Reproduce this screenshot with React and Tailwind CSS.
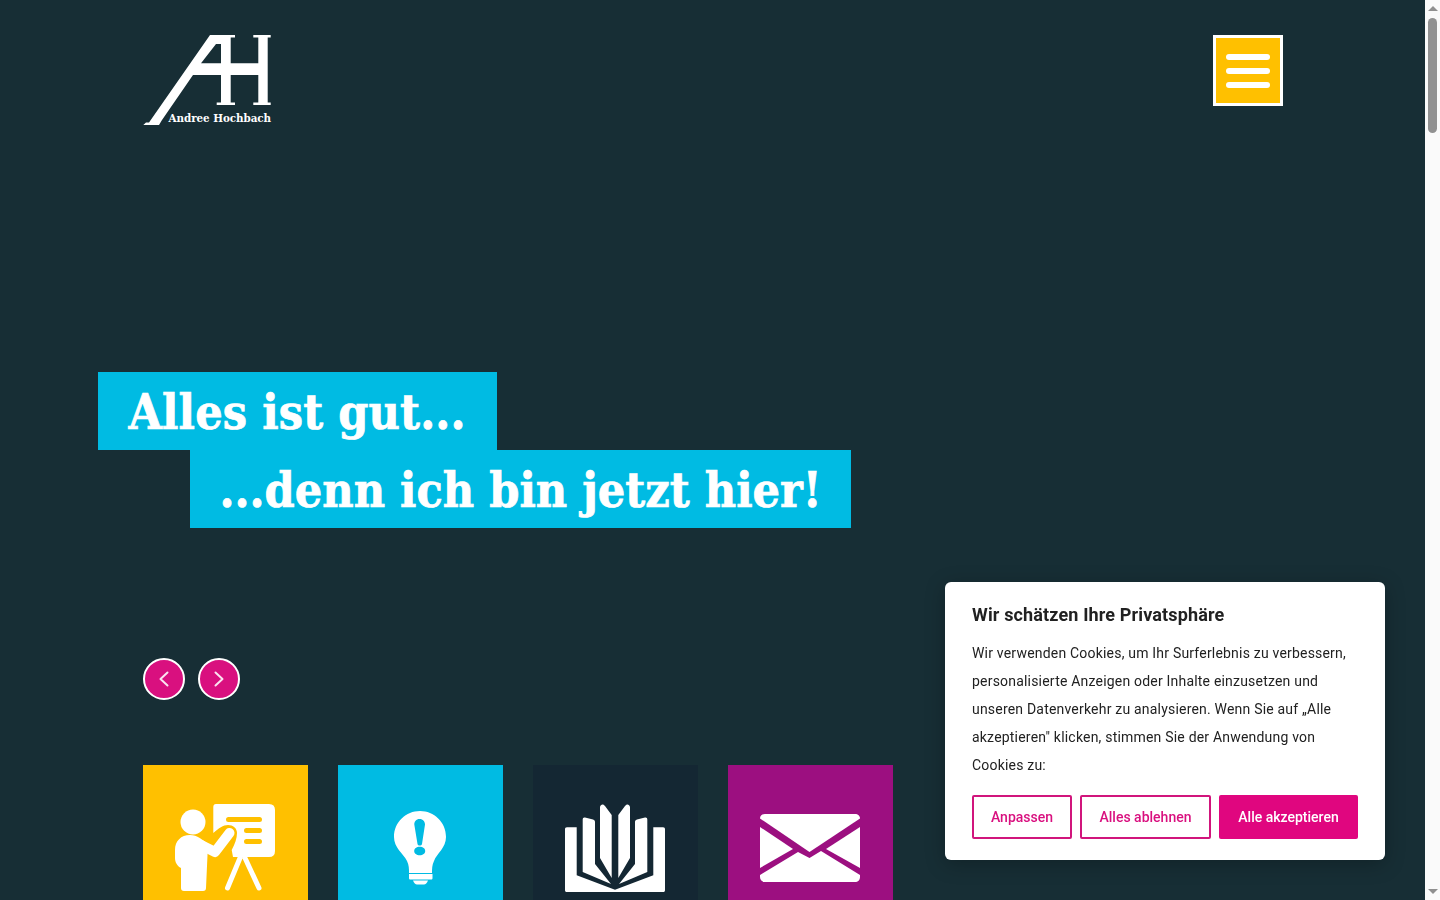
import React from "react";

const SLAB = "[font-family:'DejaVu_Serif_Condensed','DejaVu_Serif',serif]";

function Logo() {
  return (
    <div className="relative w-[130px] h-[90px]">
      <svg width="130" height="90" viewBox="0 0 130 90" className="block">
        <path fill="#fff" fillRule="evenodd" d="M0.3 90 L3 87.5 L6 87.5 L67 0 L92 0 L92 2.5 L87.7 2.5 L87.7 28.3 L115.3 28.3 L115.3 2.5 L110.3 2.5 L110.3 0 L127.7 0 L127.7 2.5 L124.7 2.5 L124.7 67.5 L127.7 67.5 L127.7 70 L110.3 70 L110.3 67.5 L115.3 67.5 L115.3 40 L87.7 40 L87.7 67.5 L92 67.5 L92 70 L73.7 70 L73.7 67.5 L78 67.5 L78 40 L50 40 L19 85 L16 90 Z M73 9 L78 9 L78 28.3 L58 28.3 Z" />
      </svg>
      <span className={`absolute left-[26px] top-[75px] text-[11.5px] leading-[16px] font-bold text-white whitespace-nowrap tracking-[-0.05px] ${SLAB}`}>Andree Hochbach</span>
    </div>
  );
}

function Teacher() {
  return (
    <svg width="100" height="90" viewBox="0 0 100 90" className="block">
      <g fill="#fff">
        <circle cx="18" cy="18" r="12.5" />
        <path d="M0 46 C0 37 6 31 15 31 C22 31 28 36 33 40 L31 84 C31 86 30 87 28 87 L9 87 C7 87 6 86 6 84 L6 64 C2 62 0 58 0 54 Z" />
        <path d="M41 0 H94 Q100 0 100 6 V47 Q100 53 94 53 H58 L56.7 46 C60 40 62 34 62 29 C62 24 58 21 53 21 C48 21 44 24 38.3 29 V3 Q38.3 0 41 0 Z" />
      </g>
      <path d="M26 41 L40 48 L54.5 29" stroke="#fff" strokeWidth="10" strokeLinecap="round" strokeLinejoin="round" fill="none" />
      <path d="M53.5 15.5 H84.5 M71.5 26.5 H84.5 M71.5 37.5 H84.5" stroke="#ffc000" strokeWidth="5" strokeLinecap="round" fill="none" />
      <path d="M65 54 L52.5 84 M70 54 L84 84" stroke="#fff" strokeWidth="5" strokeLinecap="round" fill="none" />
    </svg>
  );
}

function Bulb() {
  return (
    <svg width="52" height="76" viewBox="0 0 52 76" className="block">
      <path fill="#fff" fillRule="evenodd" d="M26 0 C40 0 52 11 52 26 C52 37 43 42 40 50 C38 54 38 58 38 62 L15 62 C15 58 15 54 13 50 C9 42 0 37 0 26 C0 11 12 0 26 0 Z M25.7 8 C22 8 20.3 10.5 20.3 13.5 L23.5 33 C24 35 27.5 35 28 33 L31 13.5 C31 10.5 29 8 25.7 8 Z M25.7 35.7 C22.5 35.7 20.2 37.5 20.2 40 C20.2 42.5 22.5 44.3 25.7 44.3 C29 44.3 31.2 42.5 31.2 40 C31.2 37.5 29 35.7 25.7 35.7 Z" />
      <path fill="#fff" d="M15 63 L38.5 63 L38.5 67 C38.5 68 38 68.5 37 68.5 L16.5 68.5 C15.5 68.5 15 68 15 67 Z M19 69.5 L34 69.5 C33 72 31.5 73.5 30 73.5 L23 73.5 C21.5 73.5 20 72 19 69.5 Z" />
    </svg>
  );
}

function Book() {
  return (
    <svg width="100" height="88" viewBox="0 0 100 88" className="block">
      <g fill="#fff">
        <path d="M2 23.3 L11.7 23.3 L11.7 71.3 L50 85.7 L88.3 71.3 L88.3 23.3 L98 23.3 C99.5 23.3 100 24 100 25.5 L100 86 C100 87.5 99.5 88 98 88 L2 88 C0.5 88 0 87.5 0 86 L0 25.5 C0 24 0.5 23.3 2 23.3 Z" />
        <path d="M20 13.5 L28 15.5 C29.5 16 30 17 30 18 L30 60 L46 80 L17.7 68 L17.7 15.5 C17.7 14 18.5 13.2 20 13.5 Z" />
        <path d="M80 13.5 L72 15.5 C70.5 16 70 17 70 18 L70 60 L54 80 L82.3 68 L82.3 15.5 C82.3 14 81.5 13.2 80 13.5 Z" />
        <path d="M35 3 C35.5 0 38.5 -0.5 40 2 L46.7 11 L46.7 74 L35 54 Z" />
        <path d="M65 3 C64.5 0 61.5 -0.5 60 2 L53.3 11 L53.3 74 L65 54 Z" />
      </g>
    </svg>
  );
}

function Mail() {
  return (
    <svg width="100" height="68" viewBox="0 0 100 68" className="block">
      <g fill="#fff">
        <path d="M5 0 L95 0 C98 0 100 2 100 4.5 L49.5 38 L0 4.5 C0 2 2 0 5 0 Z" />
        <path d="M0 13 L33 35 L0 54 Z" />
        <path d="M100 13 L66 35 L100 54 Z" />
        <path d="M38 38 L49.5 44 L61 37 L100 61 L100 63 C100 66 98 68 95 68 L5 68 C2 68 0 66 0 63 L0 61 Z" />
      </g>
    </svg>
  );
}

const Chevron = ({ left }) => (
  <svg width="10" height="16" viewBox="0 0 10 16" fill="none" stroke="#fbe3f0" strokeWidth="2" strokeLinecap="round" strokeLinejoin="round">
    <path d={left ? "M8.5 1.5 L1.5 8 L8.5 14.5" : "M1.5 1.5 L8.5 8 L1.5 14.5"} />
  </svg>
);

function Scrollbar() {
  return (
    <div className="fixed right-0 top-0 w-[15px] h-[900px] bg-[#fafafa] flex flex-col items-center">
      <div className="mt-[6px] w-0 h-0 border-x-[5px] border-x-transparent border-b-[5px] border-b-[#8f8f8f]" />
      <div className="mt-[7px] w-[9px] h-[115px] rounded-full bg-[#919191]" />
      <div className="mt-auto mb-[6px] w-0 h-0 border-x-[5px] border-x-transparent border-t-[5px] border-t-[#8f8f8f]" />
    </div>
  );
}

export default function App() {
  return (
    <div className="h-screen overflow-hidden pr-[15px] bg-[#172e35] [font-family:Roboto,sans-serif]">
      <div className="max-w-[1140px] mx-auto pt-[35px]">
        <div className="flex justify-between items-start">
          <Logo />
          <button className="w-[70px] h-[71px] border-[3px] border-white bg-[#ffc000] flex flex-col items-center justify-center gap-[8px]">
            <span className="block w-[44px] h-[6px] rounded-full bg-white" />
            <span className="block w-[44px] h-[6px] rounded-full bg-white" />
            <span className="block w-[44px] h-[6px] rounded-full bg-white" />
          </button>
        </div>

        <div className={`mt-[247px] ml-[-45px] flex flex-col items-start text-white font-bold text-[48px] leading-[80px] [-webkit-text-stroke:0.7px_white] ${SLAB}`}>
          <h1 className="h-[78px] w-[399px] bg-[#00bbe3] pl-[31px] tracking-[0.1px] whitespace-nowrap">Alles ist gut...</h1>
          <h1 className="h-[78px] w-[661px] ml-[92px] bg-[#00bbe3] px-[30px] whitespace-nowrap">...denn ich bin jetzt hier!</h1>
        </div>

        <div className="mt-[130px] flex gap-[13px]">
          <button className="w-[42px] h-[42px] rounded-full border-2 border-white bg-[#d9107f] flex items-center justify-center"><Chevron left /></button>
          <button className="w-[42px] h-[42px] rounded-full border-2 border-white bg-[#d9107f] flex items-center justify-center"><Chevron /></button>
        </div>

        <div className="mt-[65px] flex gap-[30px]">
          <div className="w-[165px] h-[165px] bg-[#ffc000] flex justify-center pt-[39px]"><Teacher /></div>
          <div className="w-[165px] h-[165px] bg-[#00bbe3] flex justify-center pt-[46px]"><Bulb /></div>
          <div className="w-[165px] h-[165px] bg-[#142733] flex justify-center pt-[39px]"><Book /></div>
          <div className="w-[165px] h-[165px] bg-[#9c0f80] flex justify-center pt-[49px]"><Mail /></div>
        </div>
      </div>

      <Scrollbar />

      <div className="fixed left-[945px] top-[582px] w-[440px] h-[278px] bg-white rounded-[6px] shadow-[0_4px_20px_rgba(0,0,0,0.25)] px-[27px] pt-[21px] text-[#212121]">
        <h2 className="text-[18px] leading-[24px] font-bold tracking-[0.14px]">Wir schätzen Ihre Privatsphäre</h2>
        <p className="mt-[12px] text-[14px] leading-[28px] tracking-[0.2px]">Wir verwenden Cookies, um Ihr Surferlebnis zu verbessern, personalisierte Anzeigen oder Inhalte einzusetzen und unseren Datenverkehr zu analysieren. Wenn Sie auf „Alle akzeptieren" klicken, stimmen Sie der Anwendung von Cookies zu:</p>
        <div className="mt-[16px] flex gap-[8px]">
          <button className="w-[100px] h-[44px] border-2 border-[#d1157c] rounded-[2px] text-[#d9107f] text-[14px] font-medium">Anpassen</button>
          <button className="w-[131px] h-[44px] border-2 border-[#d1157c] rounded-[2px] text-[#d9107f] text-[14px] font-medium">Alles ablehnen</button>
          <button className="w-[139px] h-[44px] bg-[#e0067f] rounded-[2px] text-white text-[14px] font-medium">Alle akzeptieren</button>
        </div>
      </div>
    </div>
  );
}
